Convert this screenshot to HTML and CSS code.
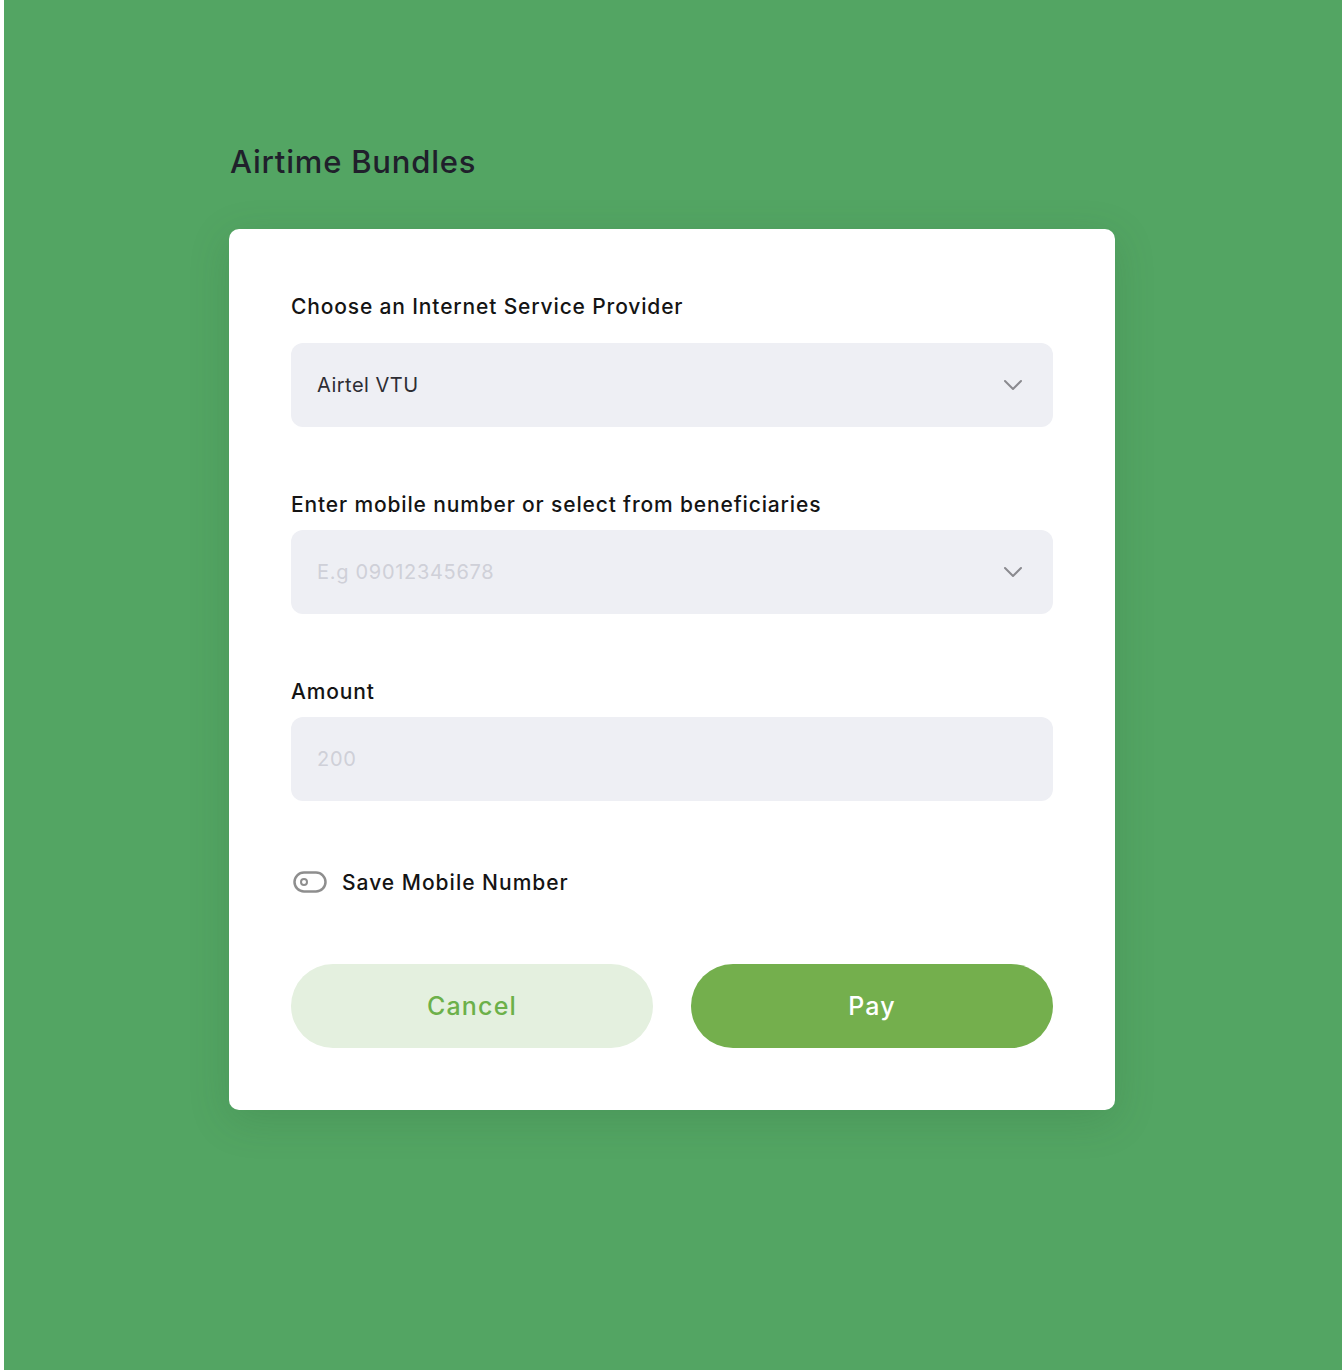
FILE: index.html
```html
<!DOCTYPE html>
<html lang="en">
<head>
<meta charset="utf-8">
<title>Airtime Bundles</title>
<link rel="stylesheet" href="styles.css">
</head>
<body>
<div class="page">
  <main class="wrap">
    <h1 class="title">Airtime Bundles</h1>
    <section class="card">
      <label class="label label-first">Choose an Internet Service Provider</label>
      <div class="field">
        <span class="value">Airtel VTU</span>
        <svg class="chev" width="20" height="12" viewBox="0 0 20 12"><polyline points="2,2 10,10 18,2" fill="none" stroke="#8a8a8f" stroke-width="2" stroke-linecap="round" stroke-linejoin="round"/></svg>
      </div>
      <label class="label">Enter mobile number or select from beneficiaries</label>
      <div class="field">
        <span class="placeholder">E.g 09012345678</span>
        <svg class="chev" width="20" height="12" viewBox="0 0 20 12"><polyline points="2,2 10,10 18,2" fill="none" stroke="#8a8a8f" stroke-width="2" stroke-linecap="round" stroke-linejoin="round"/></svg>
      </div>
      <label class="label">Amount</label>
      <div class="field">
        <span class="placeholder">200</span>
      </div>
      <div class="toggle-row">
        <svg class="toggle" width="34" height="22" viewBox="0 0 34 22"><rect x="1.5" y="1.5" width="31" height="19" rx="9.5" fill="none" stroke="#8e8e8e" stroke-width="2.5"/><circle cx="11" cy="11" r="3" fill="none" stroke="#8e8e8e" stroke-width="2"/></svg>
        <span class="toggle-text">Save Mobile Number</span>
      </div>
      <div class="actions">
        <button class="btn btn-cancel">Cancel</button>
        <button class="btn btn-pay">Pay</button>
      </div>
    </section>
  </main>
</div>
</body>
</html>
```
FILE: styles.css
```css
html, body {
  margin: 0;
  padding: 0;
  background: #ffffff;
}
body {
  font-family: "Inter", "Noto Sans", sans-serif;
}
.page {
  margin-left: 4px;
  padding-right: 2px;
  min-height: 1370px;
  background: #53a563;
  padding-top: 142px;
  box-sizing: border-box;
}
.wrap {
  width: 886px;
  margin: 0 auto;
}
.title {
  margin: 0 0 47px 1px;
  font-size: 31px;
  line-height: 40px;
  font-weight: 500;
  letter-spacing: 0.8px;
  color: #20202b;
}
.card {
  background: #ffffff;
  border-radius: 10px;
  box-shadow: 0 10px 40px rgba(40, 90, 50, 0.18);
  padding: 0 62px 62px;
  display: flex;
  flex-direction: column;
}
.label {
  display: block;
  font-size: 21px;
  line-height: 24px;
  font-weight: 500;
  letter-spacing: 0.85px;
  color: #141414;
  margin-top: 66px;
  margin-bottom: 13px;
}
.label-first {
  margin-bottom: 24px;
}
.field {
  height: 84px;
  border-radius: 12px;
  background: #eeeff4;
  display: flex;
  align-items: center;
  justify-content: space-between;
  padding: 0 30px 0 26px;
  box-sizing: border-box;
}
.value {
  font-size: 20px;
  letter-spacing: 0.5px;
  color: #2d2d33;
}
.placeholder {
  font-size: 20px;
  letter-spacing: 0.7px;
  color: #cfd0d8;
}
.toggle-row {
  margin-top: 69px;
  height: 24px;
  display: flex;
  align-items: center;
  gap: 15px;
  padding-left: 2px;
}
.toggle-text {
  font-size: 21px;
  font-weight: 500;
  letter-spacing: 1px;
  color: #141414;
}
.actions {
  margin-top: 70px;
  display: flex;
  gap: 38px;
}
.btn {
  flex: 1;
  height: 84px;
  border: none;
  border-radius: 42px;
  font-family: inherit;
  font-size: 25px;
  font-weight: 500;
  letter-spacing: 1.2px;
}
.btn-cancel {
  background: #e4f0df;
  color: #6cb04a;
}
.btn-pay {
  background: #74af4d;
  color: #ffffff;
}
```
